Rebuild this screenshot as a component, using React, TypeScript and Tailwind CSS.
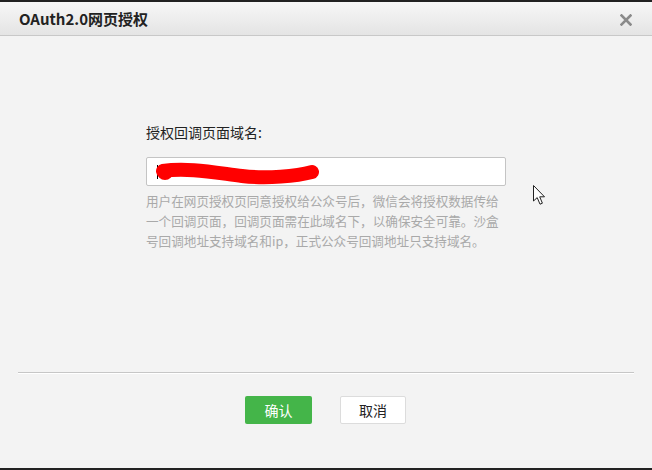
import * as React from "react";

const HELP_LINES = [
  "用户在网页授权页同意授权给公众号后，微信会将授权数据传给",
  "一个回调页面，回调页面需在此域名下，以确保安全可靠。沙盒",
  "号回调地址支持域名和ip，正式公众号回调地址只支持域名。",
];

export default function App() {
  return (
    <div className="relative w-[652px] h-[470px] flex flex-col bg-[#f3f3f3] border-t-2 border-b-2 border-[#222] font-['Noto_Sans_CJK_SC',sans-serif] overflow-hidden">
      {/* Dialog header */}
      <div className="h-[34px] shrink-0 flex items-center justify-between pl-[19px] pr-[20px] bg-gradient-to-b from-[#f7f7f7] to-[#e4e4e4] border-b border-[#c8c8c8]">
        <span className="text-[15px] font-bold text-[#222] leading-none">OAuth2.0网页授权</span>
        <svg width="12" height="12" viewBox="0 0 12 12" className="mt-[2px]">
          <path d="M1.5 1.5 L10.5 10.5 M10.5 1.5 L1.5 10.5" stroke="#8a8a8a" strokeWidth="2.6" strokeLinecap="square" />
        </svg>
      </div>

      {/* Body */}
      <div className="flex-1 flex flex-col pl-[146px] pt-[86px]">
        <label className="text-[14px] leading-[20px] text-[#222]">授权回调页面域名:</label>
        <div className="relative mt-[15px] w-[360px] h-[29px] bg-white border border-[#c4c4c4] rounded-[2px]">
          <span className="absolute left-[10px] top-[7px] w-px h-[14px] bg-black" />
          <svg width="180" height="29" viewBox="0 0 180 29" className="absolute left-0 top-0">
            <path d="M16 13 C40 9, 70 15, 95 18 S150 18, 165 14" fill="none" stroke="#ff0000" strokeWidth="14" strokeLinecap="round" />
            <circle cx="18" cy="14" r="8" fill="#ff0000" />
          </svg>
        </div>
        <div className="mt-[5px] text-[12.6px] leading-[20px] text-[#a9a9a9]">
          {HELP_LINES.map((line) => (
            <div key={line} className="whitespace-nowrap">
              {line}
            </div>
          ))}
        </div>
      </div>

      {/* Footer */}
      <div className="shrink-0 mx-[18px] h-px bg-[#c6c6c6] border-b border-white box-content" />
      <div className="shrink-0 flex justify-center gap-[28px] pt-[22px] pb-[44px] pr-px">
        <button className="w-[67px] h-[28px] rounded-[2px] bg-[#44b549] text-white text-[14px]">确认</button>
        <button className="w-[66px] h-[28px] rounded-[2px] bg-white border border-[#dcdcdc] text-[#222] text-[14px]">取消</button>
      </div>

      {/* Mouse pointer */}
      <svg width="13" height="21" viewBox="0 0 13 21" className="absolute left-[533px] top-[183px]">
        <path d="M0.5 0.5 L0.5 16 L4.2 12.6 L7 19.2 L9.4 18.2 L6.7 11.8 L11.5 11.8 Z" fill="#fff" stroke="#222" strokeWidth="1" strokeLinejoin="miter" />
      </svg>
    </div>
  );
}
